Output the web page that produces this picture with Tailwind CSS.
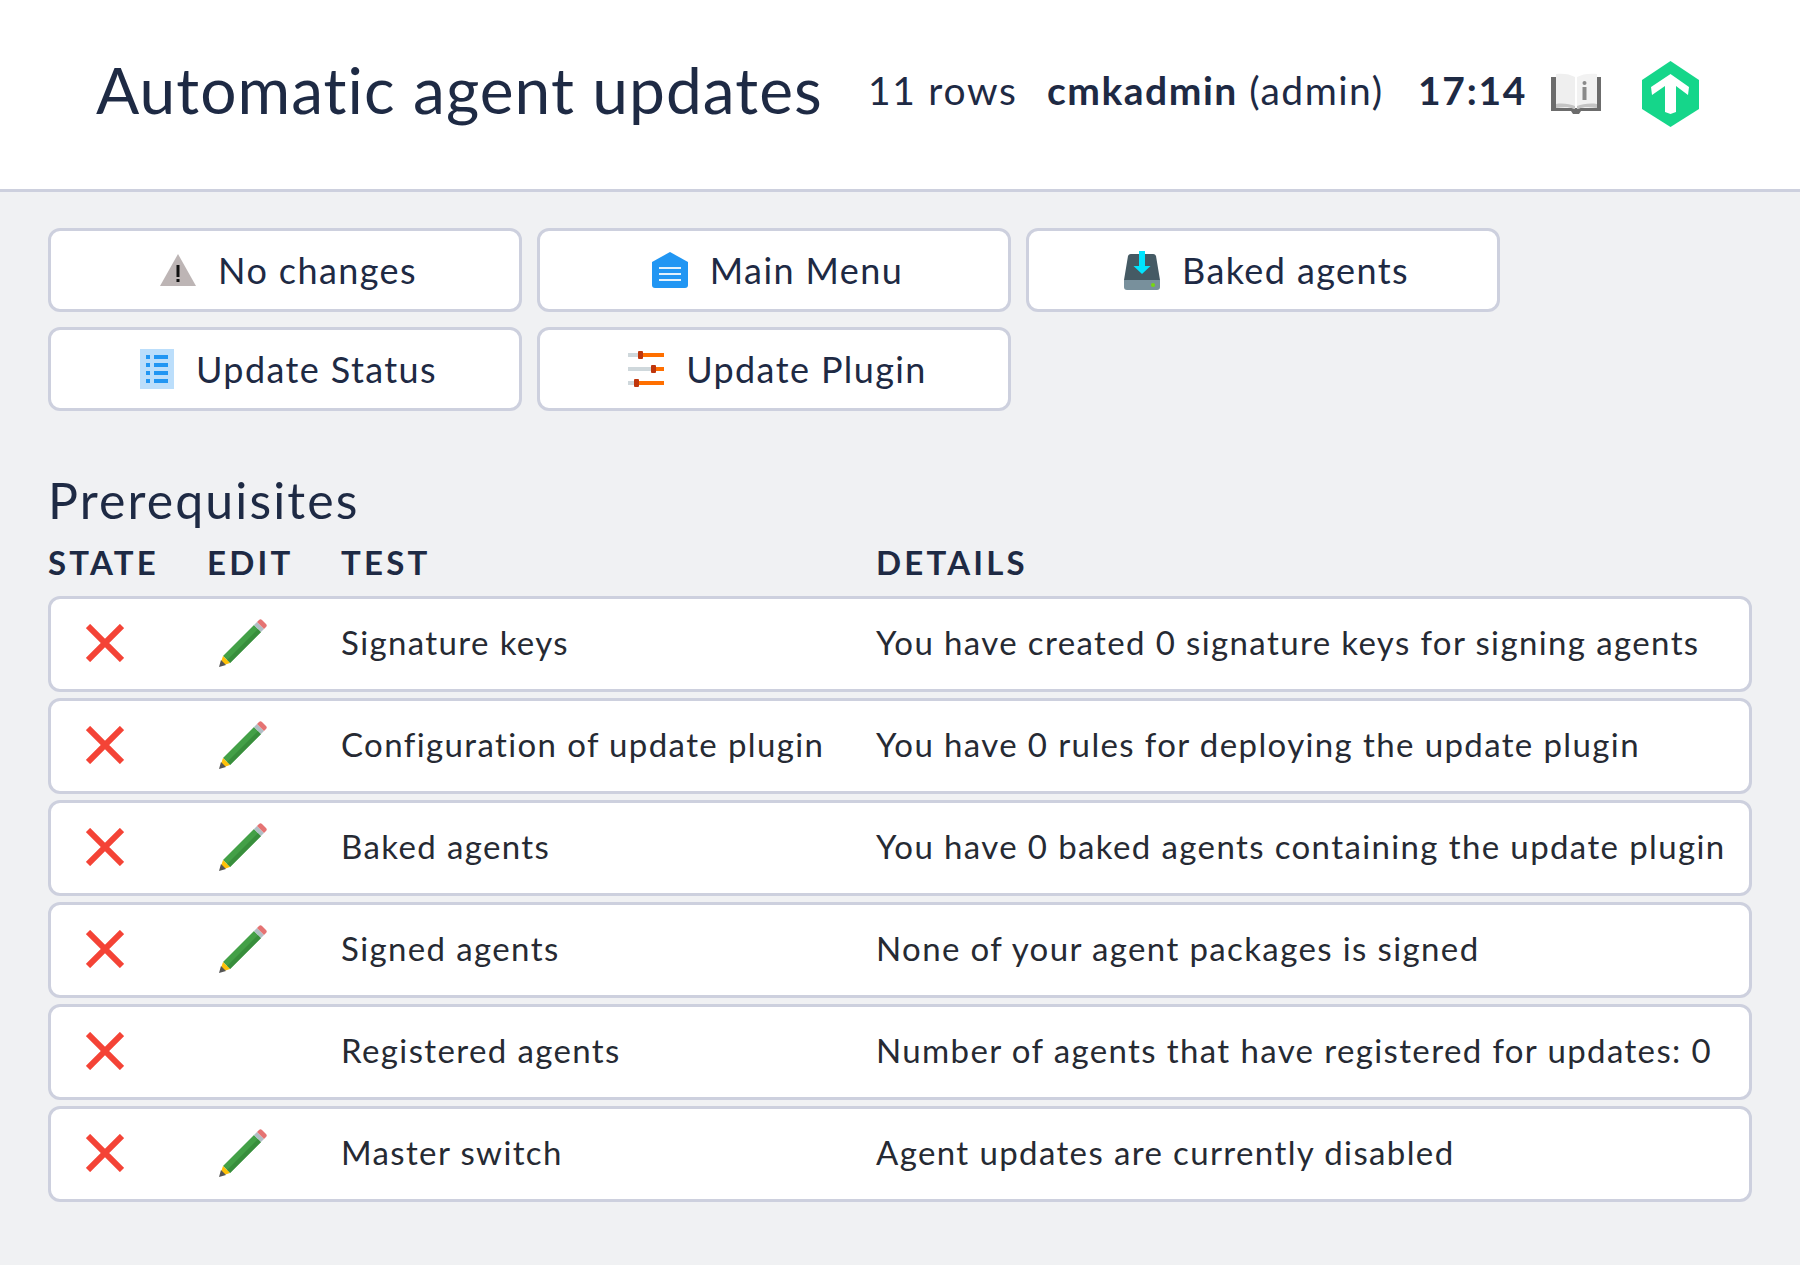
<!DOCTYPE html>
<html lang="en">
<head>
    <meta charset="UTF-8">
    <title>Automatic agent updates</title>
    <script src="https://cdn.jsdelivr.net/npm/@tailwindcss/browser@4"></script>
</head>
<body class="h-[1265px] overflow-hidden bg-[#f0f1f3] font-['Lato',sans-serif] text-[#1e2a44]">
    <!-- Header -->
    <header class="h-[192px] bg-white border-b-[3px] border-[#cdd0de] flex items-center pl-[96px] pb-[2px]">
        <h1 class="text-[64px] font-normal tracking-[1.05px] w-[772px] pb-[7px]">Automatic agent updates</h1>
        <span class="text-[39px] tracking-[1.7px] w-[179px] pb-[7px]">11 rows</span>
        <span class="text-[39px] tracking-[1.5px] w-[371px] pb-[7px]"><b>cmkadmin</b> (admin)</span>
        <b class="text-[39px] tracking-[1.7px] w-[133px] pb-[7px]">17:14</b>
        <svg class="w-[50px] h-[41px] mr-[41px]" viewBox="0 0 50 41">
            <path d="M0 4h5v31h40V4h5v34H30l-2 3h-6l-2-3H0z" fill="#6c6c6c"/>
            <path d="M5 1c7-1 14 0 19 3v32c-5-2-12-2-19-1z" fill="#efefef"/>
            <path d="M26 4c5-3 13-4 20-3v34c-7-1-15-1-20 1z" fill="#f2f2f2"/>
            <path d="M5 31c7-1 14 0 19 2v3c-5-2-12-2-19-1zM26 33c5-2 13-3 20-2v4c-7-1-15-1-20 1z" fill="#c4c4c4"/>
            <circle cx="33.500" cy="10" r="2" fill="#8a8a8a"/>
            <rect x="31.500" y="14" width="4" height="13" fill="#8a8a8a"/>
        </svg>
        <svg class="w-[57px] h-[66px]" viewBox="0 0 57 66">
            <path d="M28.500 0L57 19v29L28.500 66 0 48V19z" fill="#15d68a"/>
            <path d="M28.500 13L47 26l-1 8-12-9v26l-5.500 2-5.500-2V25l-13 9-1-8z" fill="#fff"/>
        </svg>
    </header>

    <main class="px-[48px] pt-[36px]">
        <!-- Buttons -->
        <div class="grid grid-cols-[474px_474px_474px] gap-x-[15px] gap-y-[15px] text-[36px] tracking-[1.4px]">
            <a class="h-[84px] bg-white border-[3px] border-[#cdd0de] rounded-[12px] flex items-center justify-center gap-[22px] pl-[7px]">
                <svg class="w-[36px] h-[32px]" viewBox="0 0 36 32"><path d="M18 0L36 32H0z" fill="#bdb5b5"/><rect x="16.500" y="11" width="3" height="12" fill="#111"/><rect x="16.500" y="25" width="3" height="3" fill="#111"/></svg>
                No changes
            </a>
            <a class="h-[84px] bg-white border-[3px] border-[#cdd0de] rounded-[12px] flex items-center justify-center gap-[22px] pl-[7px]">
                <svg class="w-[36px] h-[36px]" viewBox="0 0 36 36"><path d="M18 0L36 10v23a3 3 0 0 1-3 3H3a3 3 0 0 1-3-3V10z" fill="#2196f3"/><path d="M7 16h22M7 22h22M7 28h22" stroke="#e3f2fd" stroke-width="2"/></svg>
                Main Menu
            </a>
            <a class="h-[84px] bg-white border-[3px] border-[#cdd0de] rounded-[12px] flex items-center justify-center gap-[22px] pl-[7px]">
                <svg class="w-[36px] h-[39px]" viewBox="0 0 36 39">
                    <path d="M7 3h22a3 3 0 0 1 3 2l4 24H0L4 5a3 3 0 0 1 3-2z" fill="#455a64"/>
                    <path d="M0 29h36v7a3 3 0 0 1-3 3H3a3 3 0 0 1-3-3z" fill="#78909c"/>
                    <circle cx="29" cy="34" r="2" fill="#76d80f"/>
                    <path d="M15 0h6v15h5.500L18 23l-8.500-8H15z" fill="#00e5ff"/>
                </svg>
                Baked agents
            </a>
            <a class="h-[84px] bg-white border-[3px] border-[#cdd0de] rounded-[12px] flex items-center justify-center gap-[22px] pl-[7px]">
                <svg class="w-[34px] h-[40px]" viewBox="0 0 34 40">
                    <rect width="34" height="40" fill="#bbdefb"/>
                    <path d="M6 6h4v4H6zM14 6h14v4H14zM6 14h4v4H6zM14 14h14v4H14zM6 22h4v4H6zM14 22h14v4H14zM6 30h4v4H6zM14 30h14v4H14z" fill="#2196f3"/>
                </svg>
                Update Status
            </a>
            <a class="h-[84px] bg-white border-[3px] border-[#cdd0de] rounded-[12px] flex items-center justify-center gap-[22px] pl-[7px]">
                <svg class="w-[36px] h-[36px]" viewBox="0 0 36 36">
                    <rect y="2" width="36" height="4" fill="#ff6f00"/><rect y="2" width="12" height="4" fill="#cfd8dc"/>
                    <rect y="16" width="36" height="4" fill="#ff6f00"/><rect y="16" width="26" height="4" fill="#cfd8dc"/>
                    <rect y="30" width="36" height="4" fill="#ff6f00"/><rect y="30" width="8" height="4" fill="#cfd8dc"/>
                    <rect x="10" width="5" height="8" rx="1" fill="#bf360c"/><rect x="23" y="14" width="5" height="8" rx="1" fill="#bf360c"/><rect x="6" y="28" width="5" height="8" rx="1" fill="#bf360c"/>
                </svg>
                Update Plugin
            </a>
        </div>

        <!-- Prerequisites -->
        <h2 class="text-[50px] font-normal tracking-[2.1px] mt-[60px] leading-[58px]">Prerequisites</h2>
        <div class="flex text-[33px] font-bold tracking-[3.2px] leading-[40px] mt-[13px]">
            <span class="w-[159px]">STATE</span>
            <span class="w-[134px]">EDIT</span>
            <span class="w-[535px]">TEST</span>
            <span>DETAILS</span>
        </div>
        <div class="flex flex-col gap-[6px] mt-[14px] text-[33px] tracking-[1.38px] text-[#262a33]">
            <div class="h-[96px] bg-white border-[3px] border-[#cdd0de] rounded-[12px] flex items-center pl-[35px] pb-[3px]">
                <svg class="w-[38px] h-[38px] mr-[95px]" viewBox="0 0 38 38"><path d="M2 2l34 34M36 2L2 36" stroke="#f44336" stroke-width="6"/></svg>
                <svg class="w-[48px] h-[48px] mr-[74px]" viewBox="0 0 48 48"><path d="M4 37L35 6l7 7-31 31z" fill="#43a047"/><path d="M8 41L39 10l3 3-31 31z" fill="#388e3c"/><path d="M35 6l3-3 7 7-3 3z" fill="#b0bec5"/><path d="M38 3l2-2c1-1 2-1 3 0l4 4c1 1 1 2 0 3l-2 2z" fill="#e57373"/><path d="M4 37l7 7-6 2-3-3z" fill="#ffc107"/><path d="M0 48l2-7 5 5z" fill="#555"/></svg>
                <span class="w-[535px]">Signature keys</span>
                <span>You have created 0 signature keys for signing agents</span>
            </div>
            <div class="h-[96px] bg-white border-[3px] border-[#cdd0de] rounded-[12px] flex items-center pl-[35px] pb-[3px]">
                <svg class="w-[38px] h-[38px] mr-[95px]" viewBox="0 0 38 38"><path d="M2 2l34 34M36 2L2 36" stroke="#f44336" stroke-width="6"/></svg>
                <svg class="w-[48px] h-[48px] mr-[74px]" viewBox="0 0 48 48"><path d="M4 37L35 6l7 7-31 31z" fill="#43a047"/><path d="M8 41L39 10l3 3-31 31z" fill="#388e3c"/><path d="M35 6l3-3 7 7-3 3z" fill="#b0bec5"/><path d="M38 3l2-2c1-1 2-1 3 0l4 4c1 1 1 2 0 3l-2 2z" fill="#e57373"/><path d="M4 37l7 7-6 2-3-3z" fill="#ffc107"/><path d="M0 48l2-7 5 5z" fill="#555"/></svg>
                <span class="w-[535px]">Configuration of update plugin</span>
                <span>You have 0 rules for deploying the update plugin</span>
            </div>
            <div class="h-[96px] bg-white border-[3px] border-[#cdd0de] rounded-[12px] flex items-center pl-[35px] pb-[3px]">
                <svg class="w-[38px] h-[38px] mr-[95px]" viewBox="0 0 38 38"><path d="M2 2l34 34M36 2L2 36" stroke="#f44336" stroke-width="6"/></svg>
                <svg class="w-[48px] h-[48px] mr-[74px]" viewBox="0 0 48 48"><path d="M4 37L35 6l7 7-31 31z" fill="#43a047"/><path d="M8 41L39 10l3 3-31 31z" fill="#388e3c"/><path d="M35 6l3-3 7 7-3 3z" fill="#b0bec5"/><path d="M38 3l2-2c1-1 2-1 3 0l4 4c1 1 1 2 0 3l-2 2z" fill="#e57373"/><path d="M4 37l7 7-6 2-3-3z" fill="#ffc107"/><path d="M0 48l2-7 5 5z" fill="#555"/></svg>
                <span class="w-[535px]">Baked agents</span>
                <span>You have 0 baked agents containing the update plugin</span>
            </div>
            <div class="h-[96px] bg-white border-[3px] border-[#cdd0de] rounded-[12px] flex items-center pl-[35px] pb-[3px]">
                <svg class="w-[38px] h-[38px] mr-[95px]" viewBox="0 0 38 38"><path d="M2 2l34 34M36 2L2 36" stroke="#f44336" stroke-width="6"/></svg>
                <svg class="w-[48px] h-[48px] mr-[74px]" viewBox="0 0 48 48"><path d="M4 37L35 6l7 7-31 31z" fill="#43a047"/><path d="M8 41L39 10l3 3-31 31z" fill="#388e3c"/><path d="M35 6l3-3 7 7-3 3z" fill="#b0bec5"/><path d="M38 3l2-2c1-1 2-1 3 0l4 4c1 1 1 2 0 3l-2 2z" fill="#e57373"/><path d="M4 37l7 7-6 2-3-3z" fill="#ffc107"/><path d="M0 48l2-7 5 5z" fill="#555"/></svg>
                <span class="w-[535px]">Signed agents</span>
                <span>None of your agent packages is signed</span>
            </div>
            <div class="h-[96px] bg-white border-[3px] border-[#cdd0de] rounded-[12px] flex items-center pl-[35px] pb-[3px]">
                <svg class="w-[38px] h-[38px] mr-[95px]" viewBox="0 0 38 38"><path d="M2 2l34 34M36 2L2 36" stroke="#f44336" stroke-width="6"/></svg>
                <span class="w-[48px] mr-[74px]"></span>
                <span class="w-[535px]">Registered agents</span>
                <span>Number of agents that have registered for updates: 0</span>
            </div>
            <div class="h-[96px] bg-white border-[3px] border-[#cdd0de] rounded-[12px] flex items-center pl-[35px] pb-[3px]">
                <svg class="w-[38px] h-[38px] mr-[95px]" viewBox="0 0 38 38"><path d="M2 2l34 34M36 2L2 36" stroke="#f44336" stroke-width="6"/></svg>
                <svg class="w-[48px] h-[48px] mr-[74px]" viewBox="0 0 48 48"><path d="M4 37L35 6l7 7-31 31z" fill="#43a047"/><path d="M8 41L39 10l3 3-31 31z" fill="#388e3c"/><path d="M35 6l3-3 7 7-3 3z" fill="#b0bec5"/><path d="M38 3l2-2c1-1 2-1 3 0l4 4c1 1 1 2 0 3l-2 2z" fill="#e57373"/><path d="M4 37l7 7-6 2-3-3z" fill="#ffc107"/><path d="M0 48l2-7 5 5z" fill="#555"/></svg>
                <span class="w-[535px]">Master switch</span>
                <span>Agent updates are currently disabled</span>
            </div>
        </div>
    </main>
</body>
</html>
